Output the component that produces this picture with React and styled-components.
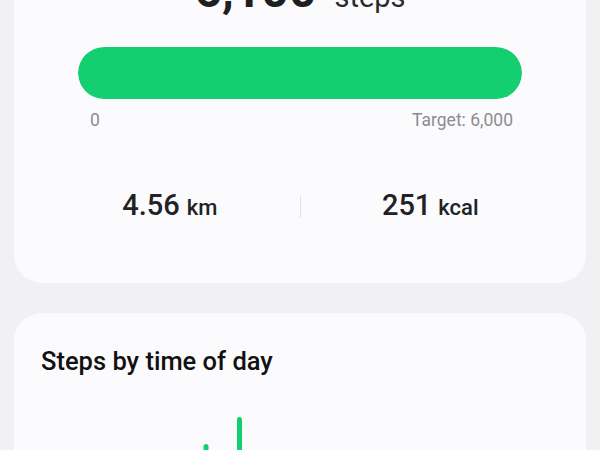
import React from 'react';
import styled, { createGlobalStyle } from 'styled-components';

const GlobalStyle = createGlobalStyle`
  html, body {
    margin: 0;
    padding: 0;
    background: #f1f1f3;
    font-family: Roboto, "Noto Sans", "Liberation Sans", sans-serif;
    color: #222;
    overflow: hidden;
  }
`;

const Page = styled.div`
  margin-top: -62px;
  padding: 0 14px 40px;
  display: flex;
  flex-direction: column;
  gap: 30px;
`;

const Card = styled.section`
  background: #fbfbfd;
  border-radius: 28px;
  padding: ${props => props.padding};
  display: flex;
  flex-direction: column;
`;

const TotalRow = styled.div`
  display: flex;
  justify-content: center;
  align-items: baseline;
  line-height: 56px;
`;

const TotalValue = styled.span`
  font-size: 48px;
  font-weight: 700;
  color: #1f1f22;
`;

const TotalUnit = styled.span`
  font-size: 29px;
  font-weight: 400;
  color: #2a2a2d;
  margin-left: 18px;
`;

const ProgressTrack = styled.div`
  margin: 22px 64px 0;
  height: 52px;
  border-radius: 26px;
  background: #e6e6ea;
  overflow: hidden;
`;

const ProgressFill = styled.div`
  height: 100%;
  border-radius: 26px;
  background: #13cf70;
`;

const ScaleRow = styled.div`
  display: flex;
  justify-content: space-between;
  margin: 11px 73px 0 76px;
  font-size: 17.5px;
  line-height: 20px;
  color: #8c8c91;
`;

const MetricsRow = styled.div`
  display: flex;
  align-items: center;
  margin-top: 58px;
  padding: 0 26px;
`;

const Metric = styled.div`
  flex: 1;
  display: flex;
  justify-content: center;
  align-items: baseline;
  line-height: 34px;
`;

const MetricValue = styled.span`
  font-size: 29px;
  font-weight: 500;
  color: #222225;
`;

const MetricUnit = styled.span`
  font-size: 22px;
  font-weight: 500;
  color: #222225;
  margin-left: 7px;
`;

const Divider = styled.div`
  width: 1px;
  height: 23px;
  background: #e3e3e7;
`;

const CardTitle = styled.h2`
  margin: 0;
  font-size: 25.5px;
  font-weight: 500;
  line-height: 29px;
  color: #111;
`;

const Chart = styled.svg`
  display: block;
  margin-top: 14px;
`;

const hourly = [
  { x: 12, v: 6 }, { x: 45, v: 4 }, { x: 78, v: 10 }, { x: 111, v: 22 },
  { x: 132, v: 40 }, { x: 165, v: 66 }, { x: 198.5, v: 93 }, { x: 232, v: 48 },
  { x: 265, v: 30 }, { x: 298, v: 44 }, { x: 331, v: 52 }, { x: 364, v: 36 },
  { x: 397, v: 28 }, { x: 430, v: 18 }, { x: 463, v: 10 }, { x: 496, v: 5 },
];

const StepsChart = () => (
  <Chart width="518" height="120" viewBox="0 0 518 120">
    {hourly.map((b, i) => (
      <line
        key={i}
        x1={b.x}
        x2={b.x}
        y1={120}
        y2={120 - b.v + 2.5}
        stroke="#13cf70"
        strokeWidth="5"
        strokeLinecap="round"
      />
    ))}
  </Chart>
);

export default function App() {
  const steps = 6100;
  const target = 6000;
  const pct = Math.min(100, (steps / target) * 100);

  return (
    <>
      <GlobalStyle />
      <Page>
        <Card padding="25px 0 58px">
          <TotalRow>
            <TotalValue>{steps.toLocaleString('en-US')}</TotalValue>
            <TotalUnit>steps</TotalUnit>
          </TotalRow>
          <ProgressTrack>
            <ProgressFill style={{ width: `${pct}%` }} />
          </ProgressTrack>
          <ScaleRow>
            <span>0</span>
            <span>Target: {target.toLocaleString('en-US')}</span>
          </ScaleRow>
          <MetricsRow>
            <Metric>
              <MetricValue>4.56</MetricValue>
              <MetricUnit>km</MetricUnit>
            </Metric>
            <Divider />
            <Metric>
              <MetricValue>251</MetricValue>
              <MetricUnit>kcal</MetricUnit>
            </Metric>
          </MetricsRow>
        </Card>
        <Card padding="34px 27px">
          <CardTitle>Steps by time of day</CardTitle>
          <StepsChart />
        </Card>
      </Page>
    </>
  );
}
